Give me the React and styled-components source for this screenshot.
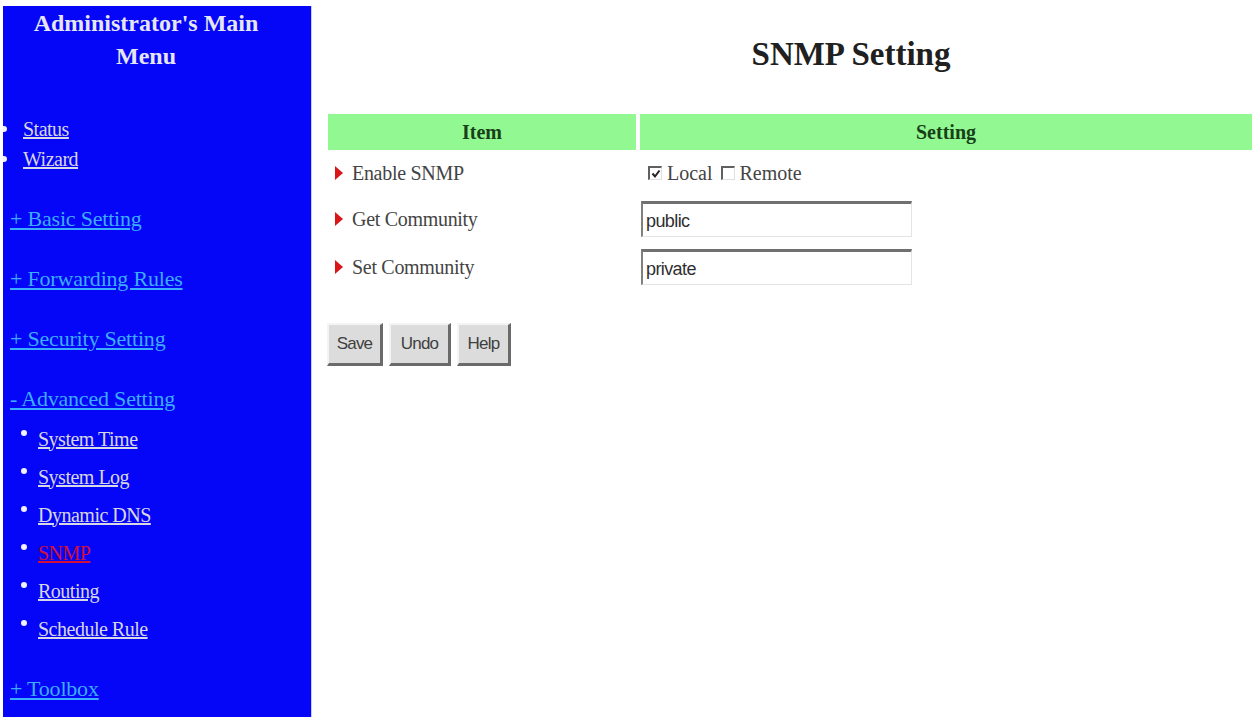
import React from "react";
import styled, { createGlobalStyle } from "styled-components";

const GlobalStyle = createGlobalStyle`
  html, body {
    margin: 0;
    padding: 0;
    background: #ffffff;
    font-family: "Liberation Serif", "Times New Roman", serif;
  }
`;

const Page = styled.div`
  display: flex;
  align-items: flex-start;
  width: 1256px;
  height: 721px;
  overflow: hidden;
`;

const Sidebar = styled.nav`
  box-sizing: border-box;
  margin: 6px 0 0 3px;
  width: 309px;
  height: 711px;
  background: #0505f8;
  border-right: 1px solid #c8c8ff;
  overflow: hidden;
  display: flex;
  flex-direction: column;
`;

const MenuTitle = styled.h1`
  margin: 0;
  padding: 1px 22px 0 0;
  font-size: 24px;
  line-height: 33px;
  font-weight: bold;
  text-align: center;
  color: #e6e6f2;
`;

const TopList = styled.div`
  margin-top: 41px;
  display: flex;
  flex-direction: column;
`;

const SubList = styled.div`
  margin-top: 6px;
  display: flex;
  flex-direction: column;
`;

const Item = styled.div`
  display: flex;
  align-items: center;
  height: ${(p) => (p.$sub ? 38 : 30)}px;
  padding-left: ${(p) => (p.$sub ? 18 : 0)}px;
`;

const Dot = styled.span`
  flex: none;
  width: 6px;
  height: 6px;
  border-radius: 50%;
  background: #f0f0ff;
  margin-left: ${(p) => (p.$sub ? 0 : -2)}px;
  margin-right: ${(p) => (p.$sub ? 11 : 16)}px;
  align-self: ${(p) => (p.$sub ? "flex-start" : "center")};
  margin-top: ${(p) => (p.$sub ? 10 : 0)}px;
`;

const Link = styled.a`
  font-size: 20px;
  color: ${(p) => (p.$active ? "#d0103a" : "#d6d6e4")};
  text-decoration: underline;
  letter-spacing: -0.5px;
  cursor: pointer;
`;

const Section = styled.a`
  display: block;
  margin-top: ${(p) => p.$gap ?? 30}px;
  padding-left: 7px;
  height: 30px;
  line-height: 30px;
  font-size: 22px;
  color: #3cacff;
  text-decoration: underline;
  letter-spacing: -0.2px;
  cursor: pointer;
`;

const Main = styled.main`
  flex: 1;
  padding: 36px 4px 0 16px;
`;

const Heading = styled.h2`
  margin: 0 0 41px;
  padding-left: 122px;
  font-size: 33px;
  line-height: 37px;
  font-weight: bold;
  text-align: center;
  color: #202020;
`;

const Table = styled.div`
  display: grid;
  grid-template-columns: 308px 1fr;
  column-gap: 4px;
`;

const HeadCell = styled.div`
  height: 36px;
  line-height: 36px;
  background: #92f892;
  text-align: center;
  font-size: 20px;
  font-weight: bold;
  color: #184018;
`;

const Label = styled.div`
  display: flex;
  align-items: center;
  height: ${(p) => p.$h}px;
  padding-left: 7px;
  font-size: 20px;
  color: #444444;
  letter-spacing: -0.3px;
`;

const Arrow = styled.span`
  width: 0;
  height: 0;
  border-top: 7px solid transparent;
  border-bottom: 7px solid transparent;
  border-left: 8px solid #d81818;
  margin-right: 9px;
`;

const Value = styled.div`
  display: flex;
  align-items: center;
  height: ${(p) => p.$h}px;
  font-size: 20px;
  color: #444444;
`;

const Check = styled.span`
  display: inline-flex;
  align-items: center;
  justify-content: center;
  box-sizing: border-box;
  width: 14px;
  height: 14px;
  margin: 0 5px 0 8px;
  border-top: 2px solid #606060;
  border-left: 2px solid #606060;
  border-right: 1px solid #e0e0e0;
  border-bottom: 1px solid #e0e0e0;
  background: #fff;
`;

const TextBox = styled.div`
  box-sizing: border-box;
  width: 271px;
  height: 36px;
  margin-left: 1px;
  padding: 2px 0 0 3px;
  display: flex;
  align-items: center;
  border-top: 3px solid #707070;
  border-left: 2px solid #808080;
  border-right: 1px solid #e4e4e4;
  border-bottom: 1px solid #e4e4e4;
  font-family: "Liberation Sans", Arial, sans-serif;
  font-size: 18px;
  color: #303030;
  letter-spacing: -0.6px;
`;

const Buttons = styled.div`
  display: flex;
  gap: 6px;
  margin: 31px 0 0 -1px;
`;

const Button = styled.button`
  box-sizing: border-box;
  height: 43px;
  width: ${(p) => p.$w}px;
  padding: 0;
  background: #dcdcdc;
  border-top: 2px solid #f4f4f4;
  border-left: 2px solid #f4f4f4;
  border-right: 3px solid #6a6a6a;
  border-bottom: 3px solid #6a6a6a;
  font-family: "Liberation Sans", Arial, sans-serif;
  font-size: 17px;
  color: #404040;
  letter-spacing: -0.8px;
`;

const CheckMark = () => (
  <svg width="10" height="10" viewBox="0 0 10 10">
    <path d="M1.5 4.5 L4 7.5 L8.5 1.5" fill="none" stroke="#222" strokeWidth="2" />
  </svg>
);

const advanced = ["System Time", "System Log", "Dynamic DNS", "SNMP", "Routing", "Schedule Rule"];

export default function App() {
  return (
    <>
      <GlobalStyle />
      <Page>
        <Sidebar>
          <MenuTitle>
            Administrator's Main
            <br />
            Menu
          </MenuTitle>
          <TopList>
            <Item>
              <Dot />
              <Link>Status</Link>
            </Item>
            <Item>
              <Dot />
              <Link>Wizard</Link>
            </Item>
          </TopList>
          <Section>+ Basic Setting</Section>
          <Section>+ Forwarding Rules</Section>
          <Section>+ Security Setting</Section>
          <Section>- Advanced Setting</Section>
          <SubList>
            {advanced.map((name) => (
              <Item $sub key={name}>
                <Dot $sub />
                <Link $active={name === "SNMP"}>{name}</Link>
              </Item>
            ))}
          </SubList>
          <Section $gap={26}>+ Toolbox</Section>
        </Sidebar>
        <Main>
          <Heading>SNMP Setting</Heading>
          <Table>
            <HeadCell>Item</HeadCell>
            <HeadCell>Setting</HeadCell>
            <Label $h={46}>
              <Arrow />
              Enable SNMP
            </Label>
            <Value $h={46}>
              <Check>
                <CheckMark />
              </Check>
              Local
              <Check />
              Remote
            </Value>
            <Label $h={46}>
              <Arrow />
              Get Community
            </Label>
            <Value $h={46}>
              <TextBox>public</TextBox>
            </Value>
            <Label $h={50}>
              <Arrow />
              Set Community
            </Label>
            <Value $h={50}>
              <TextBox>private</TextBox>
            </Value>
          </Table>
          <Buttons>
            <Button $w={56}>Save</Button>
            <Button $w={62}>Undo</Button>
            <Button $w={54}>Help</Button>
          </Buttons>
        </Main>
      </Page>
    </>
  );
}
